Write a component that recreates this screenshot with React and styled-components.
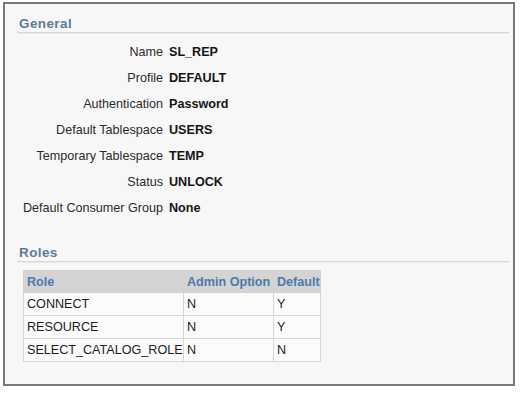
import React from 'react';
import styled, { createGlobalStyle } from 'styled-components';

const GlobalStyle = createGlobalStyle`
  body {
    margin: 0;
    background: #ffffff;
    font-family: "Liberation Sans", Arial, sans-serif;
  }
`;

const Frame = styled.div`
  box-sizing: border-box;
  margin: 2px 0 0 3px;
  width: 512px;
  height: 384px;
  border: 2px solid #7a7a7a;
  background: #f7f7f7;
  padding: 12px 4px 0 12px;
`;

const Section = styled.section`
  margin-bottom: ${props => props.gapAfter || 0}px;
`;

const SectionTitle = styled.div`
  height: 16px;
  line-height: 16px;
  padding-left: 2px;
  font-size: 13.5px;
  font-weight: bold;
  letter-spacing: 0.4px;
  color: #5b7b99;
  border-bottom: 1px solid #d6d6d6;
  box-shadow: 0 1px 0 #ececec;
`;

const Form = styled.div`
  display: grid;
  grid-template-columns: 146px 1fr;
  column-gap: 6px;
  grid-auto-rows: 26px;
  align-items: center;
  margin-top: 6px;
  font-size: 12.6px;
`;

const Label = styled.div`
  text-align: right;
  color: #2a2a2a;
  white-space: nowrap;
`;

const Value = styled.div`
  font-weight: bold;
  color: #151515;
`;

const Table = styled.table`
  margin: 8px 0 0 6px;
  border-collapse: collapse;
  font-size: 12.6px;
  border: 1px solid #d2d2d2;
`;

const Th = styled.th`
  width: ${props => props.w}px;
  height: 22px;
  padding: 0 0 0 3px;
  box-sizing: border-box;
  text-align: left;
  background: #d4d4d4;
  color: #4c7aa8;
  font-weight: bold;
  white-space: nowrap;
  border: 1px solid #d2d2d2;
`;

const Td = styled.td`
  height: 23px;
  padding: 0 0 0 3px;
  box-sizing: border-box;
  background: #fbfbfb;
  color: #1c1c1c;
  white-space: nowrap;
  border: 1px solid #d6d6d6;
`;

const fields = [
  ['Name', 'SL_REP'],
  ['Profile', 'DEFAULT'],
  ['Authentication', 'Password'],
  ['Default Tablespace', 'USERS'],
  ['Temporary Tablespace', 'TEMP'],
  ['Status', 'UNLOCK'],
  ['Default Consumer Group', 'None'],
];

const roles = [
  ['CONNECT', 'N', 'Y'],
  ['RESOURCE', 'N', 'Y'],
  ['SELECT_CATALOG_ROLE', 'N', 'N'],
];

export default function App() {
  return (
    <>
      <GlobalStyle />
      <Frame>
        <Section gapAfter={24}>
          <SectionTitle>General</SectionTitle>
          <Form>
            {fields.map(([label, value]) => (
              <React.Fragment key={label}>
                <Label>{label}</Label>
                <Value>{value}</Value>
              </React.Fragment>
            ))}
          </Form>
        </Section>
        <Section>
          <SectionTitle>Roles</SectionTitle>
          <Table>
            <thead>
              <tr>
                <Th w={160}>Role</Th>
                <Th w={90}>Admin Option</Th>
                <Th w={45}>Default</Th>
              </tr>
            </thead>
            <tbody>
              {roles.map(row => (
                <tr key={row[0]}>
                  {row.map((cell, i) => <Td key={i}>{cell}</Td>)}
                </tr>
              ))}
            </tbody>
          </Table>
        </Section>
      </Frame>
    </>
  );
}
